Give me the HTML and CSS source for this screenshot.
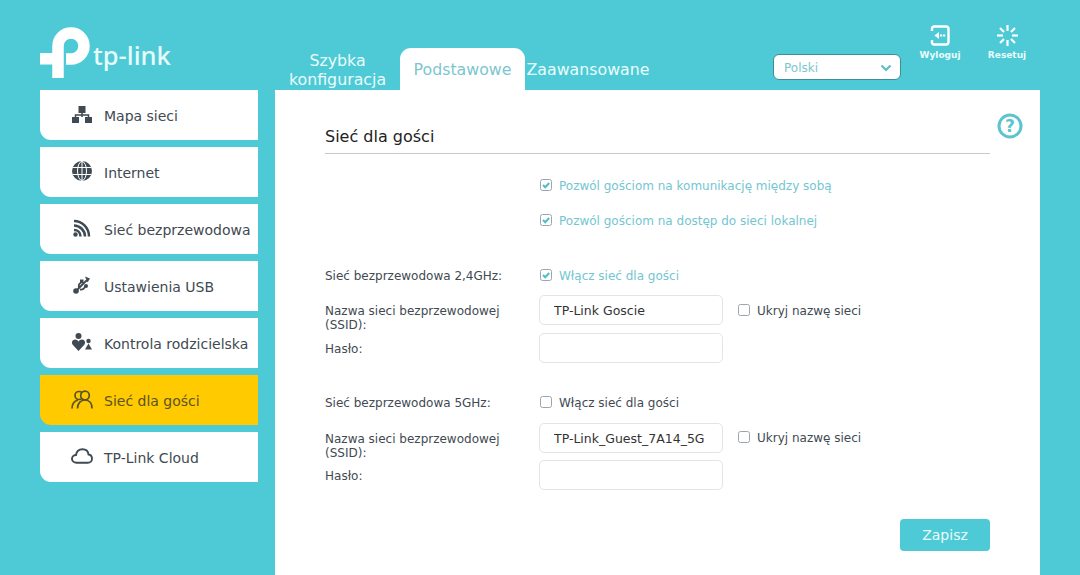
FILE: index.html
```html
<!DOCTYPE html>
<html lang="pl">
<head>
<meta charset="utf-8">
<title>TP-Link</title>
<link rel="stylesheet" href="styles.css">
</head>
<body>
<svg class="defs" width="0" height="0"><defs>
<symbol id="chk" viewBox="0 0 12 12"><rect x="0.5" y="0.5" width="11" height="11" rx="2" fill="#fff" stroke="#9aa6aa"/><path d="M3 6l2.200 2.200L9.200 4" fill="none" stroke="#4dbfcb" stroke-width="2"/></symbol>
<symbol id="unchk" viewBox="0 0 12 12"><rect x="0.5" y="0.5" width="11" height="11" rx="2" fill="#fff" stroke="#9aa6aa"/></symbol>
</defs></svg>
<header class="top">
  <div class="logo">
    <svg class="logo-mark" width="50" height="52" viewBox="40 27 50 52"><path d="M58 78V46A13 13 0 1 1 71 59H66" fill="none" stroke="#fff" stroke-width="11.5"/><rect x="40" y="53" width="20" height="11.5" fill="#fff"/></svg>
    <span class="logo-text">tp-link</span>
  </div>
  <nav class="tabs">
    <a class="tab">Szybka<br>konfiguracja</a>
    <a class="tab active">Podstawowe</a>
    <a class="tab">Zaawansowane</a>
  </nav>
  <div class="lang"><span>Polski</span>
    <svg width="12" height="8" viewBox="0 0 12 8"><path d="M1.500 1.500L6 6l4.500-4.500" fill="none" stroke="#5fbcc8" stroke-width="2.200"/></svg>
  </div>
  <div class="actions">
    <a class="action">
      <svg width="20" height="21" viewBox="0 0 20 21"><path d="M2 6V3.500A2 2 0 0 1 4 1.500H16A2.500 2.500 0 0 1 18.500 4V17A2.500 2.500 0 0 1 16 19.500H4A2 2 0 0 1 2 17.500V15" fill="none" stroke="#fff" stroke-width="2.400"/><path d="M4.500 10.500L9 7V14Z" fill="#fff"/><rect x="10" y="9.500" width="2.200" height="2" fill="#fff"/><rect x="13" y="9.500" width="2.200" height="2" fill="#fff"/></svg>
      <span>Wyloguj</span>
    </a>
    <a class="action">
      <svg width="21" height="21" viewBox="0 0 21 21"><g stroke="#fff" stroke-width="2.200" fill="none"><path d="M10.500 0v6"/><path d="M10.500 15v6"/><path d="M0 10.500h6"/><path d="M15 10.500h6"/><path d="M3 3l4 4"/><path d="M14 14l4 4"/><path d="M3 18l4-4"/><path d="M14 7l4-4"/></g></svg>
      <span>Resetuj</span>
    </a>
  </div>
</header>
<div class="layout">
  <aside class="menu">
    <a class="item"><span class="ico"><svg width="20" height="17" viewBox="0 0 20 17"><path d="M10 6v5M3.500 11.500V9h13v2.500" fill="none" stroke="#3f4a52" stroke-width="1.500"/><rect x="6.500" y="0" width="7" height="7" fill="#3f4a52"/><rect x="0" y="11" width="7" height="6" fill="#3f4a52"/><rect x="13" y="11" width="7" height="6" fill="#3f4a52"/></svg></span>Mapa sieci</a>
    <a class="item"><span class="ico"><svg width="20" height="20" viewBox="0 0 20 20"><circle cx="10" cy="10" r="10" fill="#3f4a52"/><g fill="none" stroke="#fff" stroke-width="1"><ellipse cx="10" cy="10" rx="4.500" ry="9.500"/><path d="M10 0v20M0.500 6.500h19M0.500 13.500h19"/></g></svg></span>Internet</a>
    <a class="item"><span class="ico"><svg width="20" height="18" viewBox="0 0 20 18"><g fill="none" stroke="#3f4a52" stroke-width="2.500"><path d="M2 2C10 2 17 8.500 17 17.500"/><path d="M2 6.500C8 6.500 13 11.500 13 17.500"/><path d="M2 11C5.500 11 8.500 13.500 8.500 17.500"/></g><circle cx="3.500" cy="15.500" r="2.200" fill="#3f4a52"/></svg></span>Sieć bezprzewodowa</a>
    <a class="item"><span class="ico"><svg width="18" height="18" viewBox="0 0 18 18"><circle cx="3" cy="15" r="2.800" fill="#3f4a52"/><path d="M3 15L14 4M6 12C5 8 7 7 8.500 6.500M7 13.500C10 14 12 12 12 10" fill="none" stroke="#3f4a52" stroke-width="1.800"/><path d="M12 0.500L17 2.500L14.500 6.500Z" fill="#3f4a52"/><rect x="7" y="3.500" width="3.500" height="3.500" fill="#3f4a52"/><circle cx="13" cy="10" r="2" fill="#3f4a52"/></svg></span>Ustawienia USB</a>
    <a class="item"><span class="ico"><svg width="20" height="18" viewBox="0 0 20 18"><circle cx="6.500" cy="3" r="3" fill="#3f4a52"/><path d="M6.500 18L0.500 11.500C-1 8.500 1 6.500 3 6.500C4.500 6.500 5.800 7.300 6.500 8.500C7.200 7.300 8.500 6.500 10 6.500C12 6.500 14 8.500 12.500 11.500Z" fill="#3f4a52"/><circle cx="16.500" cy="8" r="2.200" fill="#3f4a52"/><path d="M16.500 10.500L20 16.500H13Z" fill="#3f4a52"/></svg></span>Kontrola rodzicielska</a>
    <a class="item current"><span class="ico"><svg width="22" height="19" viewBox="0 0 22 19"><g fill="none" stroke="#5c5225" stroke-width="1.700"><circle cx="8" cy="5.500" r="4"/><circle cx="14" cy="5.500" r="4.300" fill="#ffca00"/><path d="M1 18.500C1 14 3.500 11 7 10"/><path d="M6.500 18.500C6.500 13.500 9.500 10 14 10C18.500 10 21 13.500 21 18.500"/></g></svg></span>Sieć dla gości</a>
    <a class="item"><span class="ico"><svg width="22" height="16" viewBox="0 0 22 16"><path d="M5.500 14.800C3 14.800 1 13 1 10.800C1 8.700 2.700 7 5 7C5.500 3.500 8 1.200 11.500 1.200C15 1.200 17.200 3.500 17.500 6.500C19.500 6.800 21 8.500 21 10.700C21 13 19.200 14.800 16.800 14.800Z" fill="none" stroke="#3f4a52" stroke-width="1.900"/></svg></span>TP-Link Cloud</a>
  </aside>
  <main class="panel">
    <svg class="help" width="26" height="26" viewBox="0 0 26 26" aria-hidden="true"><circle cx="13" cy="13" r="11" fill="none" stroke="#5cc4cf" stroke-width="3"/></svg>
    <span class="help-q">?</span>
    <h1 class="title">Sieć dla gości</h1>
    <div class="row r-first"><span class="lab"></span><label class="cb on"><svg class="box"><use href="#chk"/></svg>Pozwól gościom na komunikację między sobą</label></div>
    <div class="row r-5"><span class="lab"></span><label class="cb on"><svg class="box"><use href="#chk"/></svg>Pozwól gościom na dostęp do sieci lokalnej</label></div>
    <div class="row r-25"><span class="lab mid">Sieć bezprzewodowa 2,4GHz:</span><label class="cb on"><svg class="box"><use href="#chk"/></svg>Włącz sieć dla gości</label></div>
    <div class="row r-5"><span class="lab two">Nazwa sieci bezprzewodowej (SSID):</span><input class="field" value="TP-Link Goscie"><label class="cb side"><svg class="box"><use href="#unchk"/></svg>Ukryj nazwę sieci</label></div>
    <div class="row r-8"><span class="lab mid">Hasło:</span><input class="field"></div>
    <div class="row r-24"><span class="lab mid">Sieć bezprzewodowa 5GHz:</span><label class="cb"><svg class="box"><use href="#unchk"/></svg>Włącz sieć dla gości</label></div>
    <div class="row r-6"><span class="lab two">Nazwa sieci bezprzewodowej (SSID):</span><input class="field" value="TP-Link_Guest_7A14_5G"><label class="cb side up"><svg class="box"><use href="#unchk"/></svg>Ukryj nazwę sieci</label></div>
    <div class="row r-7"><span class="lab mid">Hasło:</span><input class="field"></div>
    <div class="foot"><button class="save">Zapisz</button></div>
  </main>
</div>
</body>
</html>
```
FILE: styles.css
```css
* { box-sizing: border-box; }
html, body { margin: 0; height: 575px; overflow: hidden; }
body { background: #4dcad6; font-family: "DejaVu Sans", Verdana, sans-serif; color: #3f4a52; }
.defs { position: absolute; }
a { display: block; }

.top { height: 90px; padding-left: 40px; display: flex; align-items: flex-end; }
.logo { width: 235px; height: 62px; display: flex; align-items: center; align-self: flex-end; margin-bottom: 6px; }
.logo-mark { flex: none; }
.logo-text { font-family: "Noto Sans", sans-serif; font-weight: 500; font-size: 25.500px; line-height: 30px; color: #e9fbfb; margin-left: 3px; margin-top: 4px; }

.tabs { display: flex; }
.tab { height: 42px; padding-top: 1px; display: flex; align-items: center; justify-content: center; text-align: center; color: #eafcfc; font-size: 15.800px; line-height: 19px; width: 125px; }
.tab.active { background: #fff; color: #7cc6cf; border-radius: 11px 11px 0 0; }
.tab:last-child { width: 126px; }

.lang { width: 128px; height: 26px; padding: 1px 8px 0 10px; margin: 0 0 10px 122px; border: 1px solid #3e8d97; border-radius: 6px; background: #fff; display: flex; align-items: center; justify-content: space-between; font-size: 12px; color: #7cc6cf; }

.actions { display: flex; align-self: flex-start; margin: 25px 0 0 9px; gap: 7px; }
.action { width: 60px; display: flex; flex-direction: column; align-items: center; color: #eafcfc; font-size: 9px; font-weight: bold; line-height: 12px; }
.action svg { margin-bottom: 3px; }

.layout { display: flex; margin-left: 40px; gap: 17px; }
.menu { width: 218px; display: flex; flex-direction: column; gap: 7px; }
.item { height: 50px; padding-top: 2px; background: #fff; border-radius: 0 0 0 11px; display: flex; align-items: center; font-size: 14px; color: #3f4a52; }
.item.current { background: #ffca00; color: #5c5225; }
.ico { width: 64px; padding-left: 28px; display: flex; align-items: center; justify-content: center; flex: none; padding-right: 8px; margin-top: -4px; }

.panel { position: relative; width: 765px; height: 485px; background: #fff; padding: 0 50px; }
.help { position: absolute; left: 722px; top: 23px; }
.help-q { position: absolute; left: 722px; top: 23px; width: 26px; height: 26px; text-align: center; font-size: 17px; font-weight: bold; line-height: 26px; color: #5cc4cf; }
.title { margin: 0; padding-top: 34px; height: 64px; font-size: 16px; line-height: 26px; font-weight: normal; color: #222; border-bottom: 1px solid #c9c9c9; }

.row { height: 30px; display: flex; align-items: center; }
.r-first { margin-top: 16px; }
.r-5 { margin-top: 5px; }
.r-6 { margin-top: 6px; }
.r-7 { margin-top: 7px; }
.r-8 { margin-top: 8px; }
.r-24 { margin-top: 24px; }
.r-25 { margin-top: 25px; }

.lab { width: 214px; flex: none; font-size: 12px; color: #3f4a52; padding-right: 20px; }
.lab.mid { padding-top: 2px; }
.lab.two { align-self: flex-start; padding-top: 9px; line-height: 14px; }

.cb { display: flex; align-items: center; padding-top: 2px; font-size: 12px; color: #3f4a52; margin-left: 1px; }
.cb.on { color: #74c6d0; }
.cb.side { margin-left: 15px; }
.cb.up { margin-bottom: 2px; }
.box { width: 12px; height: 12px; margin: -2px 7px 0 0; flex: none; }

.field { width: 184px; height: 30px; border: 1px solid #e2e4e6; border-radius: 5px; padding: 0 14px; font: 12.500px "DejaVu Sans", sans-serif; color: #333; background: #fff; }

.foot { display: flex; justify-content: flex-end; margin-top: 29px; }
.save { width: 90px; height: 32px; border: 0; border-radius: 4px; background: #4dcad6; color: #eafcfc; font: 14px "DejaVu Sans", sans-serif; }
```
